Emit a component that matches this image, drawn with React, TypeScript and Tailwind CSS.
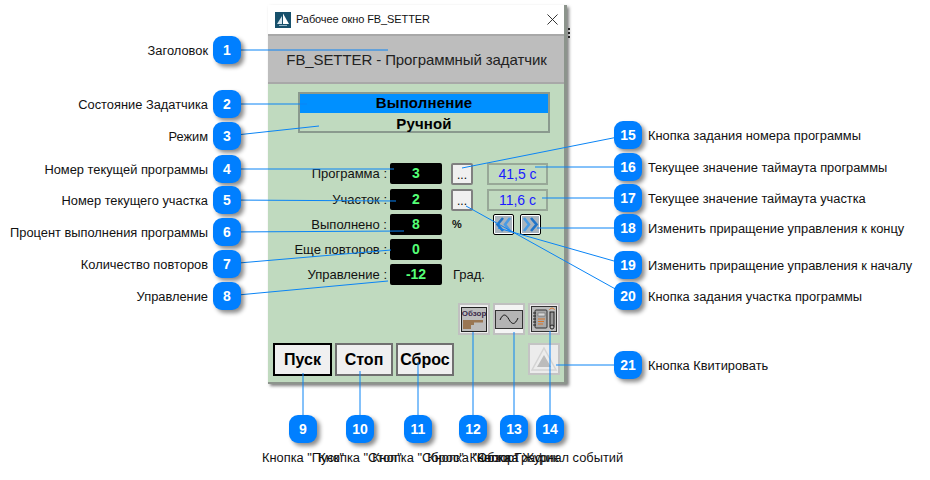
import React from 'react';

const FONT = "font-['Liberation_Sans',Arial,sans-serif]";

// Numbered callouts: badge centre, and where the leader line ends on the window
const callouts = [
  { n: 1, x: 227, y: 50, tx: 388, ty: 50 },
  { n: 2, x: 227, y: 104, tx: 307, ty: 104 },
  { n: 3, x: 227, y: 136, tx: 319, ty: 126 },
  { n: 4, x: 227, y: 169, tx: 394, ty: 169 },
  { n: 5, x: 227, y: 200, tx: 396, ty: 201 },
  { n: 6, x: 227, y: 232, tx: 404, ty: 231 },
  { n: 7, x: 227, y: 264, tx: 391, ty: 250 },
  { n: 8, x: 227, y: 296, tx: 388, ty: 281 },
  { n: 9, x: 303, y: 429, tx: 303, ty: 373 },
  { n: 10, x: 360, y: 429, tx: 360, ty: 371 },
  { n: 11, x: 418, y: 429, tx: 418, ty: 362 },
  { n: 12, x: 473, y: 429, tx: 473, ty: 332 },
  { n: 13, x: 514, y: 429, tx: 514, ty: 332 },
  { n: 14, x: 550, y: 429, tx: 550, ty: 331 },
  { n: 15, x: 628, y: 135, tx: 462, ty: 168 },
  { n: 16, x: 628, y: 167, tx: 535, ty: 167 },
  { n: 17, x: 628, y: 198, tx: 542, ty: 198 },
  { n: 18, x: 628, y: 228, tx: 537, ty: 228 },
  { n: 19, x: 628, y: 265, tx: 498, ty: 228 },
  { n: 20, x: 628, y: 296, tx: 466, ty: 206 },
  { n: 21, x: 628, y: 365, tx: 556, ty: 365 },
];

const leftLabels = [
  { y: 50, text: 'Заголовок' },
  { y: 104, text: 'Состояние Задатчика' },
  { y: 136, text: 'Режим' },
  { y: 169, text: 'Номер текущей программы' },
  { y: 200, text: 'Номер текущего участка' },
  { y: 232, text: 'Процент выполнения программы' },
  { y: 264, text: 'Количество повторов' },
  { y: 296, text: 'Управление' },
];

const rightLabels = [
  { y: 135, text: 'Кнопка задания номера программы' },
  { y: 167, text: 'Текущее значение таймаута программы' },
  { y: 198, text: 'Текущее значение таймаута участка' },
  { y: 228, text: 'Изменить приращение управления к концу' },
  { y: 265, text: 'Изменить приращение управления к началу' },
  { y: 296, text: 'Кнопка задания участка программы' },
  { y: 365, text: 'Кнопка Квитировать' },
];

const bottomLabels = [
  { x: 303, text: 'Кнопка "Пуск"' },
  { x: 360, text: 'Кнопка "Стоп"' },
  { x: 418, text: 'Кнопка "Сброс"' },
  { x: 473, text: 'Кнопка "Обзор"' },
  { x: 514, text: 'Кнопка График' },
  { x: 550, text: 'Кнопка Журнал событий' },
];

function Display({ value }: { value: string }) {
  return (
    <div className="w-[52px] h-[21px] bg-black rounded-[2px] flex items-center justify-center text-[14px] font-bold text-[#55ff77]">
      {value}
    </div>
  );
}

function DotsButton() {
  return (
    <div className="w-[22px] h-[22px] bg-[#f0f0f0] border-2 border-[#808080] rounded-[2px] flex items-end justify-center text-[12px] leading-[16px] text-black">
      ...
    </div>
  );
}

function Timeout({ value }: { value: string }) {
  return (
    <div className="w-[61px] h-[22px] border-2 border-[#98a898] flex items-center justify-center pt-[1px] text-[14px] text-[#1a1aff]">
      {value}
    </div>
  );
}

function Arrow({ flip }: { flip?: boolean }) {
  return (
    <div className="w-[21px] h-[21px] bg-white border border-black rounded-[2px] p-[1px]">
      <svg viewBox="0 0 17 17" className={`w-full h-full bg-[#a9b4bd] ${flip ? 'rotate-180' : ''}`}>
        <path d="M2 2 L7 8.5 L2 15" stroke="#4a9be4" strokeWidth="2.6" fill="none" />
        <path d="M9 2 L14.5 8.5 L9 15" stroke="#1f74c8" strokeWidth="2.6" fill="none" />
      </svg>
    </div>
  );
}

function IconButton({ children, light }: { children: React.ReactNode; light?: boolean }) {
  return (
    <div className={`w-[32px] h-[32px] border-2 border-[#c0c0c0] flex items-center justify-center ${light ? 'bg-[#f4f4f4]' : 'bg-[#ececec]'}`}>
      {children}
    </div>
  );
}

function StartButton({ label, active }: { label: string; active?: boolean }) {
  return (
    <div
      className={`h-[33px] bg-[#f0f0f0] flex items-center justify-center text-[16px] font-bold text-black ${
        active ? 'w-[59px] border-2 border-black' : 'w-[58px] border-2 border-[#707070]'
      }`}
    >
      {label}
    </div>
  );
}

function SetterWindow() {
  return (
    <div className="absolute left-[268px] top-[5px] w-[299px] h-[379px] flex flex-col bg-[#c0dabf] border-r-[3px] border-b-[2px] border-[#8c948c] shadow-[2px_2px_3px_rgba(0,0,0,0.5)]">
      {/* Title bar */}
      <div className="h-[29px] bg-white flex items-center pl-[7px] pr-[6px] shrink-0">
        <svg viewBox="0 0 16 16" className="w-[16px] h-[16px]">
          <rect width="16" height="16" fill="#17506b" />
          <path d="M2 12 L7 4 L7 12 Z" fill="#d8e6ee" />
          <path d="M8 12 L8 1.5 L14 12 Z" fill="#ffffff" />
          <rect x="4" y="13" width="8" height="1" fill="#8fb2c4" />
        </svg>
        <span className="ml-[5px] text-[11px] tracking-[-0.1px] text-[#111]">Рабочее окно FB_SETTER</span>
        <svg viewBox="0 0 12 12" className="w-[11px] h-[11px] ml-auto">
          <path d="M0.5 0.5 L11.5 11.5 M11.5 0.5 L0.5 11.5" stroke="#222" strokeWidth="1" fill="none" />
        </svg>
      </div>

      {/* Header */}
      <div className="h-[50px] shrink-0 bg-[#bdbdbd] border-t-2 border-b-2 border-[#a8a8a8] flex items-center justify-center pl-[1px] pt-[2px] text-[15px] tracking-[-0.1px] text-[#222]">
        FB_SETTER - Программный задатчик
      </div>

      {/* Body */}
      <div className="flex-1 flex flex-col">
        <div className="ml-[30px] mt-[8px] w-[252px] h-[41px] border-2 border-[#8a9a8e] flex flex-col text-[15px] font-bold tracking-[0.15px] text-black">
          <div className="h-[19px] bg-[#0090ff] flex items-center justify-center">Выполнение</div>
          <div className="h-px bg-[#8a9a8e]" />
          <div className="flex-1 flex items-center justify-center pb-[2px]">Ручной</div>
        </div>

        <div className="mt-[30px] flex flex-col gap-[4px] text-[13px] text-[#111]">
          <div className="flex items-center h-[21px]">
            <span className="w-[119px] text-right">Программа :</span>
            <div className="ml-[3px]"><Display value="3" /></div>
            <div className="ml-[9px]"><DotsButton /></div>
            <div className="ml-[14px]"><Timeout value="41,5 с" /></div>
          </div>
          <div className="flex items-center h-[21px] mt-[1px]">
            <span className="w-[119px] text-right">Участок :</span>
            <div className="ml-[3px]"><Display value="2" /></div>
            <div className="ml-[9px]"><DotsButton /></div>
            <div className="ml-[14px]"><Timeout value="11,6 с" /></div>
          </div>
          <div className="flex items-center h-[21px]">
            <span className="w-[119px] text-right">Выполнено :</span>
            <div className="ml-[3px]"><Display value="8" /></div>
            <span className="ml-[10px] w-[41px] text-[11px] font-bold">%</span>
            <Arrow flip />
            <div className="ml-[6px]"><Arrow /></div>
          </div>
          <div className="flex items-center h-[21px]">
            <span className="w-[119px] text-right">Еще повторов :</span>
            <div className="ml-[3px]"><Display value="0" /></div>
          </div>
          <div className="flex items-center h-[21px]">
            <span className="w-[119px] text-right">Управление :</span>
            <div className="ml-[3px]"><Display value="-12" /></div>
            <span className="ml-[11px]">Град.</span>
          </div>
        </div>

        <div className="mt-[18px] ml-[190px] flex gap-[3px]">
          <IconButton>
            <div className="w-[26px] h-[25px] bg-[#bdbdbd] border border-[#222] flex flex-col items-center overflow-hidden">
              <span className="text-[8px] leading-[11px] font-bold text-[#3a2a4a] whitespace-nowrap">Обзор</span>
              <svg viewBox="0 0 24 12" className="w-[24px] h-[12px]">
                <path d="M1 1 H21 V3.5 H12 V6 H9 V10 H1 Z" fill="#9a7653" />
              </svg>
            </div>
          </IconButton>
          <IconButton light>
            <svg viewBox="0 0 28 19" className="w-[28px] h-[19px]">
              <rect x="0.5" y="0.5" width="27" height="18" fill="#b4b4b4" stroke="#333" />
              <path d="M5 10 C8 3 11 4 14 9.5 C17 15 20 15 23 8" stroke="#111" strokeWidth="1" fill="none" />
            </svg>
          </IconButton>
          <IconButton>
            <svg viewBox="0 0 26 26" className="w-[26px] h-[26px]">
              <rect x="0.5" y="0.5" width="25" height="25" fill="#bdbdbd" stroke="#333" />
              <rect x="4" y="4" width="12" height="18" rx="1" fill="#a8a8a8" stroke="#333" />
              <path d="M2 7 H5 M2 10 H5 M2 13 H5 M2 16 H5 M2 19 H5" stroke="#222" />
              <rect x="7" y="7" width="7" height="3" fill="#d8d8d8" stroke="#555" strokeWidth="0.5" />
              <path d="M7 13 H14 M7 15.5 H13 M7 18 H12" stroke="#d9772a" />
              <rect x="19" y="6" width="4" height="14" fill="#999" stroke="#222" />
              <circle cx="21" cy="21" r="2" fill="#bbb" stroke="#222" />
              <path d="M18.5 4 C19 1.5 23 1.5 23.5 4" stroke="#e0792a" fill="none" />
            </svg>
          </IconButton>
        </div>

        <div className="mt-[8px] ml-[5px] flex items-start">
          <StartButton label="Пуск" active />
          <div className="ml-[3px]"><StartButton label="Стоп" /></div>
          <div className="ml-[3px]"><StartButton label="Сброс" /></div>
          <div className="ml-[74px] w-[32px] h-[32px] border-2 border-[#c4c4c4] bg-[#ececec] flex items-center justify-center">
            <svg viewBox="0 0 28 28" className="w-[28px] h-[28px]">
              <path d="M14 3 L26 25 H2 Z" fill="none" stroke="#d4d4d4" strokeWidth="1.5" />
              <path d="M14 10 L21 22 H7 Z" fill="#bcbcbc" />
            </svg>
          </div>
        </div>
      </div>

      {/* Bit of the window behind, peeking out at the right edge */}
      <div className="absolute left-[300px] top-[23px] flex flex-col gap-[2px]">
        <div className="w-[2px] h-[2px] bg-[#222]" />
        <div className="w-[2px] h-[2px] bg-[#222]" />
        <div className="w-[2px] h-[2px] bg-[#222]" />
      </div>
    </div>
  );
}

export default function App() {
  return (
    <div className={`relative w-[930px] h-[480px] bg-white overflow-hidden ${FONT}`}>
      <SetterWindow />

      {/* Leader lines */}
      <svg className="absolute inset-0" width="930" height="480">
        {callouts.map(c => (
          <line key={c.n} x1={c.x} y1={c.y} x2={c.tx} y2={c.ty} stroke="#0a84f5" strokeWidth="1" />
        ))}
      </svg>

      {callouts.map(c => (
        <div
          key={c.n}
          className="absolute w-[28px] h-[28px] rounded-[9px] bg-[#007fff] text-white text-[14px] font-bold flex items-center justify-center shadow-[3px_3px_4px_rgba(0,0,0,0.45)]"
          style={{ left: c.x - 14, top: c.y - 14 }}
        >
          {c.n}
        </div>
      ))}

      {leftLabels.map(l => (
        <div
          key={l.text}
          className="absolute right-[722px] text-[12.85px] leading-[14px] text-[#111] whitespace-nowrap"
          style={{ top: l.y - 6 }}
        >
          {l.text}
        </div>
      ))}

      {rightLabels.map(l => (
        <div
          key={l.text}
          className="absolute left-[648px] text-[12.85px] leading-[14px] text-[#111] whitespace-nowrap"
          style={{ top: l.y - 6 }}
        >
          {l.text}
        </div>
      ))}

      {bottomLabels.map(l => (
        <div
          key={l.x}
          className="absolute top-[451px] -translate-x-1/2 text-[12.85px] leading-[14px] text-[#111] whitespace-nowrap"
          style={{ left: l.x }}
        >
          {l.text}
        </div>
      ))}
    </div>
  );
}
